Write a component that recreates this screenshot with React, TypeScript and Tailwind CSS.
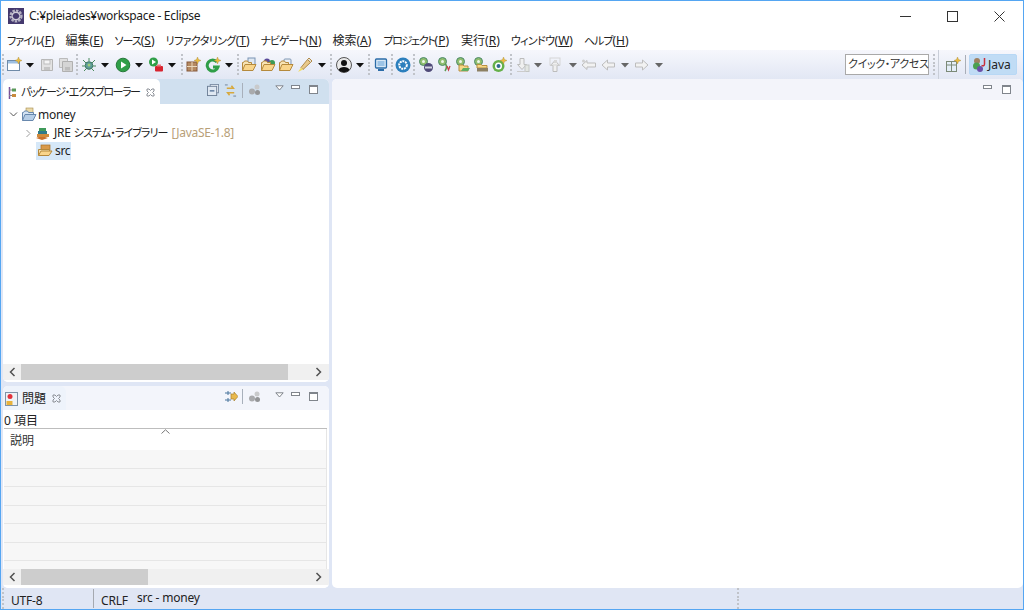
import React from "react";

const Arrow = ({ c = "#111", className = "" }: { c?: string; className?: string }) => (
  <svg width="8" height="16" viewBox="0 0 8 16" className={`shrink-0 ${className}`}><path d="M0 6h8L4 10.5z" fill={c} /></svg>
);
const Grip = ({ className = "" }: { className?: string }) => (
  <div className={`flex h-[21px] w-[2px] shrink-0 flex-col justify-between ${className}`}>
    {[0, 1, 2, 3, 4, 5].map((i) => <div key={i} className="h-[2px] w-[2px] bg-[#c0c3c9]" />)}
  </div>
);
const Ic = ({ children, className = "" }: { children: React.ReactNode; className?: string }) => (
  <svg width="16" height="16" viewBox="0 0 16 16" className={`shrink-0 ${className}`}>{children}</svg>
);
const Star = () => (
  <path d="M12.500 0l1 2.500 2.500 1-2.500 1-1 2.500-1-2.500L9 3.500l2.500-1z" fill="#eabb3e" stroke="#a98a3a" strokeWidth=".4" />
);
const Folder = ({ children, stroke = "#b5893c" }: { children?: React.ReactNode; stroke?: string }) => (
  <>
    {children}
    <path d="M1.500 13.500V5.500h1l1-1.500h3l1 1.500h3v2" fill="#f7e3b4" stroke={stroke} />
    <path d="M1.500 13.500l2.500-6h11l-3 6z" fill="#f9d58b" stroke={stroke} />
  </>
);
const Person = () => (
  <>
    <circle cx="5.500" cy="4.500" r="4" fill="#8fbd6e" stroke="#4d8a6a" />
    <circle cx="5.500" cy="4.500" r="1.500" fill="#eef5ea" />
  </>
);
const X = ({ className = "" }: { className?: string }) => (
  <svg width="9" height="9" viewBox="0 0 9 9" className={`shrink-0 ${className}`} fill="none" stroke="#8b8f96">
    <path d="M1 1h2l1.500 1.500L6 1h2v2L6.500 4.500 8 6v2H6L4.500 6.500 3 8H1V6l1.500-1.500L1 3z" />
  </svg>
);
const Min = ({ className = "" }: { className?: string }) => (
  <svg width="10" height="5" viewBox="0 0 10 5" className={`shrink-0 ${className}`}><rect x=".5" y=".5" width="8" height="3" fill="#fff" stroke="#80858c" /></svg>
);
const Max = ({ className = "" }: { className?: string }) => (
  <svg width="9" height="9" viewBox="0 0 9 9" className={`shrink-0 ${className}`}><rect x=".5" y=".5" width="8" height="8" fill="#fff" stroke="#80858c" /><path d="M1 1.500h7" stroke="#80858c" /></svg>
);
const Tri = ({ className = "" }: { className?: string }) => (
  <svg width="9" height="6" viewBox="0 0 9 6" className={`shrink-0 ${className}`}><path d="M.8.8h7.400L4.500 5z" fill="#fff" stroke="#80858c" /></svg>
);
const Dots = ({ className = "" }: { className?: string }) => (
  <svg width="14" height="14" viewBox="0 0 14 14" className={`shrink-0 ${className}`}>
    <circle cx="4" cy="8.500" r="3" fill="#a9aaac" /><circle cx="9" cy="4" r="2.500" fill="#c9cacb" /><circle cx="9.500" cy="9.500" r="2.500" fill="#939496" />
  </svg>
);
const VBar = () => <div className="h-[15px] w-px shrink-0 bg-[#a8b0bb]" />;

const M = ({ t, k, className = "", tr = "" }: { t: string; k: string; className?: string; tr?: string }) => (
  <span className={`whitespace-pre ${className}`}><span className={tr}>{t}</span>(<span className="underline">{k}</span>)</span>
);

function ScrollBar({ thumb }: { thumb: string }) {
  return (
    <div className="flex h-4 shrink-0 items-center bg-[#f0f0f0]">
      <div className="flex w-[18px] shrink-0 justify-center">
        <svg width="7" height="10" viewBox="0 0 7 10" fill="none" stroke="#505050" strokeWidth="1.500"><path d="M5.500 1L1.500 5l4 4" /></svg>
      </div>
      <div className="h-4 flex-1">
        <div className={`h-4 bg-[#cdcdcd] ${thumb}`} />
      </div>
      <div className="flex w-[21px] shrink-0 justify-center pr-[1px]">
        <svg width="7" height="10" viewBox="0 0 7 10" fill="none" stroke="#505050" strokeWidth="1.500"><path d="M1.500 1l4 4-4 4" /></svg>
      </div>
    </div>
  );
}

export default function App() {
  return (
    <div
      className="flex h-[610px] w-[1024px] flex-col overflow-hidden border border-[#55a6f2] bg-white text-[12px] text-[#222] [font-feature-settings:'palt']"
      style={{ fontFamily: '"Noto Sans","Noto Sans CJK JP",sans-serif' }}
    >
      {/* Title bar */}
      <div className="flex h-[30px] shrink-0 items-center bg-white">
        <svg width="16" height="16" viewBox="0 0 16 16" className="ml-[7px] mt-[-1px] shrink-0">
          <rect width="16" height="16" fill="#44396e" />
          <circle cx="8" cy="8" r="5.500" fill="none" stroke="#b4b1c2" strokeWidth="2.200" strokeDasharray="2.500 1.100" />
          <circle cx="8" cy="8" r="3.800" fill="none" stroke="#cfccd8" strokeWidth="1.500" />
          <path d="M4.500 8h7" stroke="#44396e" />
        </svg>
        <span className="ml-[5px] mt-[-1px] text-[12px] tracking-[-0.3px] text-[#1a1a1a]">C:¥pleiades¥workspace - Eclipse</span>
        <div className="ml-auto flex items-center">
          <svg width="11" height="11" viewBox="0 0 11 11" className="mr-[36px]"><path d="M0 5.500h11" stroke="#333" /></svg>
          <svg width="11" height="11" viewBox="0 0 11 11" className="mr-[36px]"><rect x=".5" y=".5" width="10" height="10" fill="none" stroke="#333" /></svg>
          <svg width="11" height="11" viewBox="0 0 11 11" className="mr-[18px]"><path d="M.5.500l10 10M10.500.500l-10 10" stroke="#333" /></svg>
        </div>
      </div>
      {/* Menu */}
      <div className="flex h-[19px] shrink-0 items-center bg-white pl-[6px] text-[12px] text-[#222]">
        <M t="ファイル" k="F" tr="text-[11px] tracking-[-1px]" />
        <M t="編集" k="E" className="ml-[11px]" />
        <M t="ソース" k="S" className="ml-[11px]" tr="text-[11px] tracking-[-1px]" />
        <M t="リファクタリング" k="T" className="ml-[11px]" tr="text-[11px] tracking-[-0.600px]" />
        <M t="ナビゲート" k="N" className="ml-[11px]" tr="text-[11px] tracking-[-1.200px]" />
        <M t="検索" k="A" className="ml-[11px]" />
        <M t="プロジェクト" k="P" className="ml-[12px]" tr="text-[11px] tracking-[-1.300px]" />
        <M t="実行" k="R" className="ml-[12px]" />
        <M t="ウィンドウ" k="W" className="ml-[11px]" tr="text-[11px] tracking-[-0.600px]" />
        <M t="ヘルプ" k="H" className="ml-[11px]" tr="text-[11px] tracking-[-1px]" />
      </div>
      {/* Toolbar */}
      <div className="flex h-[29px] shrink-0 items-center bg-gradient-to-b from-[#f6f7fc] to-[#e2e7f4] pl-px">
        <Grip />
        <Ic className="ml-0.5"><rect x="1.500" y="3.500" width="12" height="10" fill="#fff" stroke="#6f8aa8" /><rect x="2" y="4" width="11" height="2.500" fill="#9dbfe2" /><Star /></Ic>
        <Arrow className="ml-1" />
        <Ic className="ml-[5px]"><path d="M2.500 2.500h11v11h-11z" fill="#e3e3e3" stroke="#b5b5b5" /><rect x="5" y="3" width="6" height="4" fill="#f5f5f5" stroke="#bdbdbd" /><rect x="5" y="10" width="6" height="3" fill="#c5c5c5" /></Ic>
        <Ic className="ml-[3px]"><path d="M1.500 1.500h8v9h-8z" fill="#e0e0e0" stroke="#bbb" /><path d="M4.500 4.500h10v10h-10z" fill="#d5d5d5" stroke="#b0b0b0" /><rect x="7" y="10" width="5" height="3.500" fill="#bdbdbd" /></Ic>
        <Grip className="ml-0.5" />
        <Ic className="ml-[3px]"><circle cx="8" cy="8.500" r="3.800" fill="#5f9c9a" stroke="#3c7a62" /><path d="M8 1v3M2 3l3 3M14 3l-3 3M1 9h3M12 9h3M3 14l2.500-2.500M13 14l-2.500-2.500" stroke="#4b8a5c" /><circle cx="8" cy="8" r="1.500" fill="#9ecf7a" /></Ic>
        <Arrow className="ml-1" />
        <Ic className="ml-1.5"><circle cx="8" cy="8" r="6.800" fill="#2f9e47" stroke="#26793a" /><path d="M6 4.500L11.500 8 6 11.500z" fill="#fff" /></Ic>
        <Arrow className="ml-1" />
        <Ic className="ml-[5px]"><circle cx="5.500" cy="5" r="4.500" fill="#2f9e47" /><path d="M4 2.500L8 5 4 7.500z" fill="#fff" /><rect x="7" y="9" width="8" height="5.500" rx="1" fill="#d8232f" /><rect x="9" y="7.500" width="4" height="2" fill="#e9757c" /></Ic>
        <Arrow className="ml-1" />
        <Grip className="ml-[5px]" />
        <Ic className="ml-0.5"><rect x="2" y="5" width="10" height="9" fill="#b58a62" stroke="#86593a" /><path d="M7 5v9M2 9.500h10" stroke="#ead9bd" /><Star /></Ic>
        <Ic className="ml-1"><path d="M12 5a5.500 5.500 0 1 0 1 5H8" fill="none" stroke="#2f9e47" strokeWidth="3" /><Star /></Ic>
        <Arrow className="ml-1" />
        <Grip className="ml-1" />
        <Ic className="ml-0.5"><Folder><rect x="7" y="1" width="7" height="8" fill="#dfe8f3" stroke="#7b94b3" /></Folder></Ic>
        <Ic className="ml-[3px]"><Folder><circle cx="7" cy="4.500" r="3" fill="#5a4a9a" /><circle cx="12" cy="6" r="3" fill="#3e9a55" /></Folder></Ic>
        <Ic className="ml-0.5"><Folder><rect x="6" y="2" width="7" height="6" rx="1" fill="#e8eef5" stroke="#8198b4" /></Folder></Ic>
        <Ic className="ml-[3px]"><path d="M4 10.500l6.500-8 3 3-7.500 7z" fill="#e9c98a" stroke="#b08a4a" /><path d="M10.500 2.500l1.500-1.500 3 3-1.500 1.500z" fill="#e6e0d2" stroke="#b08a4a" /><path d="M1 15l3-4.500 2 2z" fill="#f2dd66" /></Ic>
        <Arrow className="ml-[5px]" />
        <Grip className="ml-1" />
        <Ic className="ml-1"><circle cx="8" cy="8" r="7.500" fill="#e9e9e9" stroke="#555" /><circle cx="8" cy="6" r="3" fill="#111" /><path d="M2.500 13c1-4 10-4 11 0-3 3-8 3-11 0z" fill="#111" /></Ic>
        <Arrow className="ml-1" />
        <Grip className="ml-1" />
        <Ic className="ml-[3px]"><rect x="2.500" y="2" width="11" height="9" rx="1" fill="#d9e8f6" stroke="#2b6ca8" strokeWidth="1.300" /><rect x="4.500" y="4" width="7" height="5" fill="#9cc3e6" /><path d="M5 13h6" stroke="#2b6ca8" strokeWidth="2" /></Ic>
        <Grip className="ml-0.5" />
        <Ic className="ml-0.5"><circle cx="8" cy="8" r="7.500" fill="#2c7fbd" /><circle cx="8" cy="8" r="3.800" fill="none" stroke="#fff" strokeWidth="2" strokeDasharray="2 .8" /><circle cx="8" cy="8" r="1.700" fill="#2c7fbd" /></Ic>
        <Grip className="ml-0.5" />
        <Ic className="ml-[3px]"><Person /><ellipse cx="10.500" cy="10.500" rx="4.500" ry="4.500" fill="#4f4a78" /><rect x="7" y="9.500" width="7" height="2" fill="#d4d4e2" /></Ic>
        <Ic className="ml-[3px]"><Person /><path d="M8 7c2 1 2 4 0 7" fill="none" stroke="#5c9a52" strokeWidth="1.600" /><path d="M10 9l1.500 4L13 9" fill="none" stroke="#c93e4a" strokeWidth="1.300" /></Ic>
        <Ic className="ml-0.5"><Person /><path d="M4 14V8h4l1 1h4v5z" fill="#f5d887" stroke="#b98f3f" /><path d="M6 14l2-3h7l-2 3z" fill="#5fae62" /></Ic>
        <Ic className="ml-0.5"><Person /><path d="M4 11V7.500h4l1 1h5V11z" fill="#f5d887" stroke="#b98f3f" /><rect x="4" y="11" width="11" height="3.500" fill="#8c8063" /></Ic>
        <Ic className="ml-0.5"><circle cx="7.500" cy="9" r="6" fill="#65b04a" /><circle cx="7.500" cy="9" r="3.500" fill="#fff" /><circle cx="7.500" cy="9" r="2" fill="#2e6b8f" /><Star /></Ic>
        <Grip className="ml-[3px]" />
        <Ic className="ml-0.5"><path d="M6 1.500h4v6h2.500L8 12.500 3.500 7.500H6z" fill="#f0f0f0" stroke="#bcbcbc" /><rect x="11" y="8" width="4" height="6.500" fill="#e3e6e3" stroke="#c3c6c3" /><path d="M3 14.500h9" stroke="#ccc" /></Ic>
        <Arrow c="#666" className="ml-1" />
        <Ic className="ml-[5px]"><path d="M6 14.500h4v-6h2.500L8 3.500 3.500 8.500H6z" fill="#f0f0f0" stroke="#bcbcbc" /><rect x="3" y="1" width="10" height="7" fill="none" stroke="#d5d5d5" /><rect x="7" y="3" width="3" height="3" fill="#d8d8d8" /></Ic>
        <Arrow c="#666" className="ml-1.5" />
        <Ic className="ml-1"><path d="M1 8l5-4.500V6h8.500v4H6v2.500z" fill="#f2f2f2" stroke="#bdbdbd" /><circle cx="2.500" cy="4" r="1.500" fill="#cfcfcf" /></Ic>
        <Ic className="ml-[3px]"><path d="M2 8l5.500-5v3h7v4h-7v3z" fill="#f2f2f2" stroke="#bdbdbd" /></Ic>
        <Arrow c="#666" className="ml-[5px]" />
        <Ic className="ml-[5px]"><path d="M14 8L8.500 3v3h-7v4h7v3z" fill="#f2f2f2" stroke="#bdbdbd" /></Ic>
        <Arrow c="#666" className="ml-[5px]" />
        <div className="ml-auto flex h-[21px] w-[84px] shrink-0 items-center whitespace-nowrap border border-[#a9a9a9] bg-white pl-[2px] text-[11px] tracking-[-0.300px] text-[#333]">クイック・アクセス</div>
        <Grip className="ml-1" />
        <div className="ml-[3px] h-[29px] w-px shrink-0 bg-[#c9ced8]" />
        <Ic className="ml-1.5"><rect x="1.500" y="4.500" width="10" height="10" fill="#e4eef8" stroke="#7c8a78" /><path d="M1.500 8h10M6.500 4.500v10" stroke="#7c8a78" /><Star /></Ic>
        <div className="ml-1 h-[19px] w-px shrink-0 bg-[#a9aeb8]" />
        <div className="ml-[3px] mr-1.5 flex h-[21px] w-[48px] shrink-0 items-center rounded-[2px] border border-[#b8d8f5] bg-[#c0dcf5] pl-[2px] text-[12px] text-[#222]">
          <svg width="15" height="15" viewBox="0 0 15 15" className="shrink-0">
            <circle cx="5" cy="4" r="3" fill="#a08060" /><circle cx="4.500" cy="9" r="3.500" fill="#4aa050" /><circle cx="8" cy="12" r="3" fill="#6b4fa8" />
            <path d="M12.500 1v6c0 2-1.500 2-3 1.500" fill="none" stroke="#c9303c" strokeWidth="1.500" />
          </svg>
          <span className="ml-px">Java</span>
        </div>
      </div>
      {/* Main */}
      <div className="flex min-h-0 flex-1 gap-[3px] bg-[#dfe6f5] pl-[2px]">
        <div className="flex w-[326px] shrink-0 flex-col gap-[4px]">
          {/* Package explorer */}
          <div className="flex h-[303px] shrink-0 flex-col overflow-hidden rounded-[5px] bg-white">
            <div className="flex h-[25px] shrink-0 items-center bg-[#d0e0ef]">
              <div className="flex h-[25px] w-[157px] shrink-0 items-center rounded-t-[5px] bg-white pl-[5px] pt-[2px]">
                <svg width="9" height="12" viewBox="0 0 9 12" className="mt-[1px] shrink-0"><path d="M1.500 0v12" stroke="#7a4f9a" strokeWidth="1.500" /><rect x="4" y="1.500" width="4" height="3" fill="#5a9a5a" /><rect x="4" y="7" width="4" height="3" fill="#c8893c" /><path d="M1 3h3M1 8.500h3" stroke="#888" /></svg>
                <span className="ml-[4px] whitespace-nowrap text-[11px] tracking-[-1.400px] text-[#222]">パッケージ・エクスプローラー</span>
                <X className="ml-auto mr-[5px]" />
              </div>
              <div className="mt-[-3px] flex items-center">
                <svg width="12" height="12" viewBox="0 0 13 13" className="ml-[47px] shrink-0"><rect x="3.500" y=".5" width="9" height="9" fill="#e8eef5" stroke="#7d8ea5" /><rect x=".5" y="2.500" width="10" height="10" fill="#dfe8f2" stroke="#6d7f96" /><path d="M3 7.500h5" stroke="#4a6a90" strokeWidth="1.500" /></svg>
                <svg width="13" height="13" viewBox="0 0 14 14" className="ml-[5px] shrink-0" fill="none"><path d="M3 4.500h7l-2-2.500M11 9.500H4l2 2.500" stroke="#d7a83c" strokeWidth="1.700" /><path d="M1 1h3M10 13h3" stroke="#6d7f96" /></svg>
                <div className="ml-[5px]"><VBar /></div>
                <Dots className="ml-[5px]" />
                <Tri className="ml-[13px] mt-[-4px]" />
                <Min className="ml-[7px] mt-[-5px]" />
                <Max className="ml-[8px] mt-[-1px]" />
              </div>
            </div>
            {/* tree */}
            <div className="flex min-h-0 flex-1 flex-col pl-[6px] pt-px">
              <div className="flex h-[19px] items-center">
                <svg width="9" height="9" viewBox="0 0 9 9" fill="none" stroke="#555" className="shrink-0"><path d="M1 2.500l3.500 3.500L8 2.500" /></svg>
                <svg width="16" height="16" viewBox="0 0 16 16" className="ml-[3px] shrink-0"><rect x="5" y="1" width="7" height="6" fill="#ead9a8" stroke="#a58a4a" strokeWidth=".6" /><path d="M1.500 13.500V5.500h1l1-1.500h3l1 1.500h5v2" fill="#d4e3f3" stroke="#6888ad" /><path d="M1.500 13.500l2.500-6h11l-3 6z" fill="#b7cee7" stroke="#6888ad" /></svg>
                <span className="ml-px text-[12px] tracking-[-0.2px]">money</span>
              </div>
              <div className="flex h-[18px] items-center pl-[15px]">
                <svg width="9" height="9" viewBox="0 0 9 9" fill="none" stroke="#9c9c9c" className="shrink-0"><path d="M2.500 1L6 4.500 2.500 8" /></svg>
                <svg width="16" height="16" viewBox="0 0 16 16" className="ml-[2px] shrink-0"><path d="M1 13l6-2 6 2-6 2z" fill="#c8702c" /><rect x="2" y="9" width="12" height="3" fill="#d08a3c" /><rect x="3" y="6" width="9" height="3" fill="#2f7a8a" /><rect x="4" y="3" width="7" height="3" fill="#3f9a5a" /></svg>
                <span className="ml-[3px] whitespace-nowrap text-[12px] tracking-[-0.2px]">JRE <span className="text-[11px] tracking-[-0.900px]">システム・ライブラリー</span></span>
                <span className="ml-[4px] whitespace-nowrap text-[12px] tracking-[-0.3px] text-[#b8a078]">[JavaSE-1.8]</span>
              </div>
              <div className="flex h-[18px] items-center pl-[27px]">
                <div className="flex h-[18px] w-[35px] items-center bg-[#d6e8f8]">
                  <svg width="16" height="16" viewBox="0 0 16 16" className="ml-px shrink-0"><rect x="4" y="2" width="9" height="5" fill="#d89a4a" stroke="#a87028" strokeWidth=".7" /><path d="M1.500 12.500V6.500h11v2" fill="#f4dfae" stroke="#b5893c" /><path d="M1.500 12.500l2.500-4.500h11l-3 4.500z" fill="#f9d58b" stroke="#b5893c" /></svg>
                  <span className="ml-[2px] text-[12px] tracking-[-0.3px]">src</span>
                </div>
              </div>
            </div>
            <ScrollBar thumb="w-[267px]" />
            <div className="h-[2px] shrink-0 bg-white" />
          </div>
          {/* Problems */}
          <div className="flex min-h-0 flex-1 flex-col overflow-hidden rounded-[5px] bg-white">
            <div className="flex h-[24px] shrink-0 items-center bg-[#f3f5fb]">
              <div className="flex h-[24px] w-[63px] shrink-0 items-center rounded-tr-[6px] bg-[#eef3fb] pl-[2px] pt-[1px]">
                <svg width="13" height="14" viewBox="0 0 13 14" className="shrink-0"><rect x=".5" y=".5" width="12" height="13" fill="#eef2f6" stroke="#7e93a8" /><circle cx="5" cy="4.500" r="2.500" fill="#e2323c" /><rect x="1.500" y="9" width="6" height="4" fill="#e8b23c" /></svg>
                <span className="ml-[4px] whitespace-nowrap text-[12px] text-[#222]">問題</span>
                <X className="ml-[6px]" />
              </div>
              <div className="mt-[-3px] flex items-center">
                <svg width="14" height="13" viewBox="0 0 14 13" className="ml-[158px] shrink-0" fill="none"><path d="M1 3h6M1 10h6" stroke="#48749c" /><path d="M4 1v4M4 8v4" stroke="#48749c" /><path d="M7 4h3V2l4 4.500L10 11V9H7z" fill="#e9b94d" stroke="#a9822f" strokeWidth=".7" /></svg>
                <div className="ml-[4px]"><VBar /></div>
                <Dots className="ml-[5px]" />
                <Tri className="ml-[13px] mt-[-4px]" />
                <Min className="ml-[7px] mt-[-5px]" />
                <Max className="ml-[8px] mt-[-1px]" />
              </div>
            </div>
            <div className="flex h-[18px] shrink-0 items-center pl-px pt-[3px] text-[12px] text-[#222]">0 項目</div>
            <div className="flex min-h-0 flex-1 flex-col pl-px pr-[2px]">
              <div className="h-[1px] shrink-0 bg-[#bdbdbd]" />
              <div className="relative flex h-[21px] shrink-0 items-center border-r border-[#e5e5e5] pl-[6px] pt-[2px] text-[12px] text-[#333]">
                説明
                <svg width="9" height="5" viewBox="0 0 9 5" fill="none" stroke="#777" className="absolute left-[157px] top-0"><path d="M.5 4.500L4.500.8l4 3.700" /></svg>
              </div>
              {[0, 1, 2, 3, 4, 5].map((i) => (
                <div key={i} className="h-[18.500px] shrink-0 border-b border-r border-[#e6e6e6] bg-[#f7f7f7]" />
              ))}
              <div className="min-h-0 flex-1 border-r border-[#e6e6e6] bg-[#f7f7f7]" />
            </div>
            <ScrollBar thumb="w-[127px]" />
            <div className="h-[3px] shrink-0 bg-white" />
          </div>
        </div>
        {/* Editor */}
        <div className="flex min-w-0 flex-1 flex-col overflow-hidden rounded-[5px] bg-white">
          <div className="flex h-[21px] shrink-0 items-start justify-end bg-[#f3f4fa] pr-[12px] pt-[6px]">
            <Min />
            <Max className="ml-[9px]" />
          </div>
        </div>
      </div>
      {/* Status */}
      <div className="flex h-[21px] shrink-0 items-center bg-[#e0e6f4] text-[12px] text-[#222]">
        <Grip className="ml-px h-[14px]" />
        <span className="ml-[7px] mt-[5px] w-[82px] tracking-[-0.2px]">UTF-8</span>
        <div className="h-[19px] w-px bg-[#a5a9b0]" />
        <span className="ml-[7px] mt-[5px] w-[36px] tracking-[-0.2px]">CRLF</span>
        <span className="mt-[-1px] tracking-[-0.2px]">src - money</span>
        <Grip className="ml-auto mr-[284px] h-[14px]" />
      </div>
    </div>
  );
}
